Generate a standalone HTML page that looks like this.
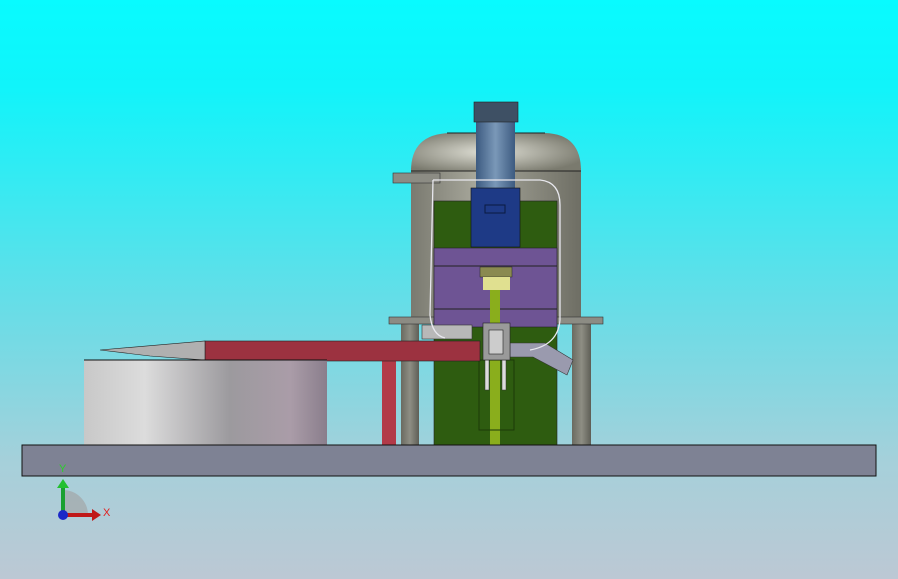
<!DOCTYPE html>
<html><head><meta charset="utf-8"><style>
html,body{margin:0;padding:0;width:898px;height:579px;overflow:hidden}
svg{display:block}
</style></head><body>
<svg width="898" height="579" viewBox="0 0 898 579" xmlns="http://www.w3.org/2000/svg">
<defs>
<linearGradient id="bg" x1="0" y1="0" x2="0" y2="1">
<stop offset="0" stop-color="#08fbff"/><stop offset="0.15" stop-color="#10f4fa"/>
<stop offset="0.55" stop-color="#6cdce6"/><stop offset="0.8" stop-color="#a6d0da"/><stop offset="1" stop-color="#bcc8d4"/></linearGradient>
<linearGradient id="cyl" x1="0" x2="1"><stop offset="0" stop-color="#c8c8c8"/><stop offset="0.25" stop-color="#dcdcdc"/><stop offset="0.6" stop-color="#9c9a9e"/><stop offset="0.85" stop-color="#aa9ca8"/><stop offset="1" stop-color="#8a7e8c"/></linearGradient>
<linearGradient id="tank" x1="0" x2="1"><stop offset="0" stop-color="#7a7a70"/><stop offset="0.4" stop-color="#a8a89c"/><stop offset="1" stop-color="#6e6e64"/></linearGradient>
<radialGradient id="dome" cx="0.45" cy="0.5" r="0.6"><stop offset="0" stop-color="#e0e0d6"/><stop offset="1" stop-color="#7a7a6e"/></radialGradient>
<linearGradient id="leg" x1="0" x2="1"><stop offset="0" stop-color="#6a6a60"/><stop offset="0.5" stop-color="#8e8e84"/><stop offset="1" stop-color="#5e5e56"/></linearGradient>
<linearGradient id="tube" x1="0" x2="1"><stop offset="0" stop-color="#3c5a80"/><stop offset="0.5" stop-color="#7a98b8"/><stop offset="1" stop-color="#3c5a80"/></linearGradient>
</defs>
<rect width="898" height="579" fill="url(#bg)"/>
<!-- tank -->
<rect x="411" y="168" width="170" height="150" fill="url(#tank)"/>
<path d="M411 171 Q411 134 450 133 L545 133 Q581 134 581 171 Z" fill="url(#dome)"/>
<line x1="411" y1="171" x2="581" y2="171" stroke="#222" stroke-width="1"/>
<line x1="447" y1="133" x2="545" y2="133" stroke="#222"/>
<rect x="401" y="318" width="18" height="127" fill="url(#leg)"/>
<rect x="572" y="318" width="19" height="127" fill="url(#leg)"/>
<rect x="389" y="317" width="214" height="7" fill="#8c8c84" stroke="#333" stroke-width="0.6"/>
<rect x="393" y="173" width="47" height="10" fill="#8c8c84" stroke="#333" stroke-width="0.6"/>
<!-- tube -->
<rect x="476" y="122" width="39" height="70" fill="url(#tube)"/>
<rect x="474" y="102" width="44" height="20" fill="#3e5064" stroke="#222" stroke-width="0.6"/>
<!-- green block -->
<rect x="434" y="201" width="123" height="244" fill="#2e5c10" stroke="#222" stroke-width="0.6"/>
<rect x="434" y="248" width="123" height="79" fill="#6e5494" stroke="#222" stroke-width="0.6"/>
<line x1="434" y1="266" x2="557" y2="266" stroke="#222"/>
<line x1="434" y1="309" x2="557" y2="309" stroke="#222"/>
<rect x="471" y="188" width="49" height="59" fill="#1e3a86" stroke="#111" stroke-width="0.6"/>
<rect x="485" y="205" width="20" height="8" fill="none" stroke="#0a1a40"/>
<rect x="480" y="267" width="32" height="10" fill="#8a8a50" stroke="#222" stroke-width="0.5"/>
<rect x="483" y="277" width="27" height="13" fill="#e0e090"/>
<rect x="490" y="290" width="10" height="155" fill="#8aae1c"/>
<rect x="479" y="360" width="35" height="70" fill="none" stroke="#1c3a08"/>
<rect x="485" y="360" width="4" height="30" fill="#ddd" stroke="#333" stroke-width="0.5"/>
<rect x="502" y="360" width="4" height="30" fill="#ddd" stroke="#333" stroke-width="0.5"/>
<rect x="422" y="325" width="50" height="14" fill="#b8b8b8" stroke="#333" stroke-width="0.6"/>
<!-- chute -->
<polygon points="510,343 545,343 573,360 567,375 533,357 510,357" fill="#9a9aae" stroke="#333" stroke-width="0.6"/>
<!-- hose -->
<path d="M433 180 L430 315 Q432 335 445 338 M433 180 L540 180 Q560 182 560 205 L560 320 Q558 345 530 350" fill="none" stroke="#e8e8ee" stroke-width="1.3"/>
<!-- small block -->
<rect x="483" y="323" width="27" height="37" fill="#9a9a9a" stroke="#222" stroke-width="0.6"/>
<rect x="489" y="330" width="14" height="24" fill="#ccc" stroke="#222" stroke-width="0.6"/>
<!-- red arm -->
<rect x="382" y="361" width="14" height="84" fill="#b23a48"/>
<rect x="205" y="341" width="275" height="20" fill="#9c3240" stroke="#222" stroke-width="0.6"/>
<!-- blade -->
<polygon points="100,350 205,341 205,360 150,356" fill="#b0b0b0" stroke="#222" stroke-width="0.6"/>
<!-- cylinder -->
<rect x="84" y="360" width="243" height="85" fill="url(#cyl)"/>
<line x1="84" y1="360" x2="327" y2="360" stroke="#111"/>
<!-- base -->
<rect x="22" y="445" width="854" height="31" fill="#7e8294" stroke="#111" stroke-width="1"/>
<!-- triad -->
<path d="M63 515 L63 490 A25 25 0 0 1 88 515 Z" fill="#a0a0a0" opacity="0.6"/>
<rect x="61" y="486" width="4" height="29" fill="#1aa030"/>
<polygon points="57,488 63,479 69,488" fill="#22c030"/>
<rect x="63" y="513" width="30" height="4" fill="#c01818"/>
<polygon points="92,509 101,515 92,521" fill="#c01818"/>
<circle cx="63" cy="515" r="5" fill="#1a28c8"/>
<text x="59" y="472" font-family="Liberation Sans,sans-serif" font-size="11" fill="#2ad02a">Y</text>
<text x="103" y="516" font-family="Liberation Sans,sans-serif" font-size="11" fill="#e02020">X</text>
</svg>
</body></html>
